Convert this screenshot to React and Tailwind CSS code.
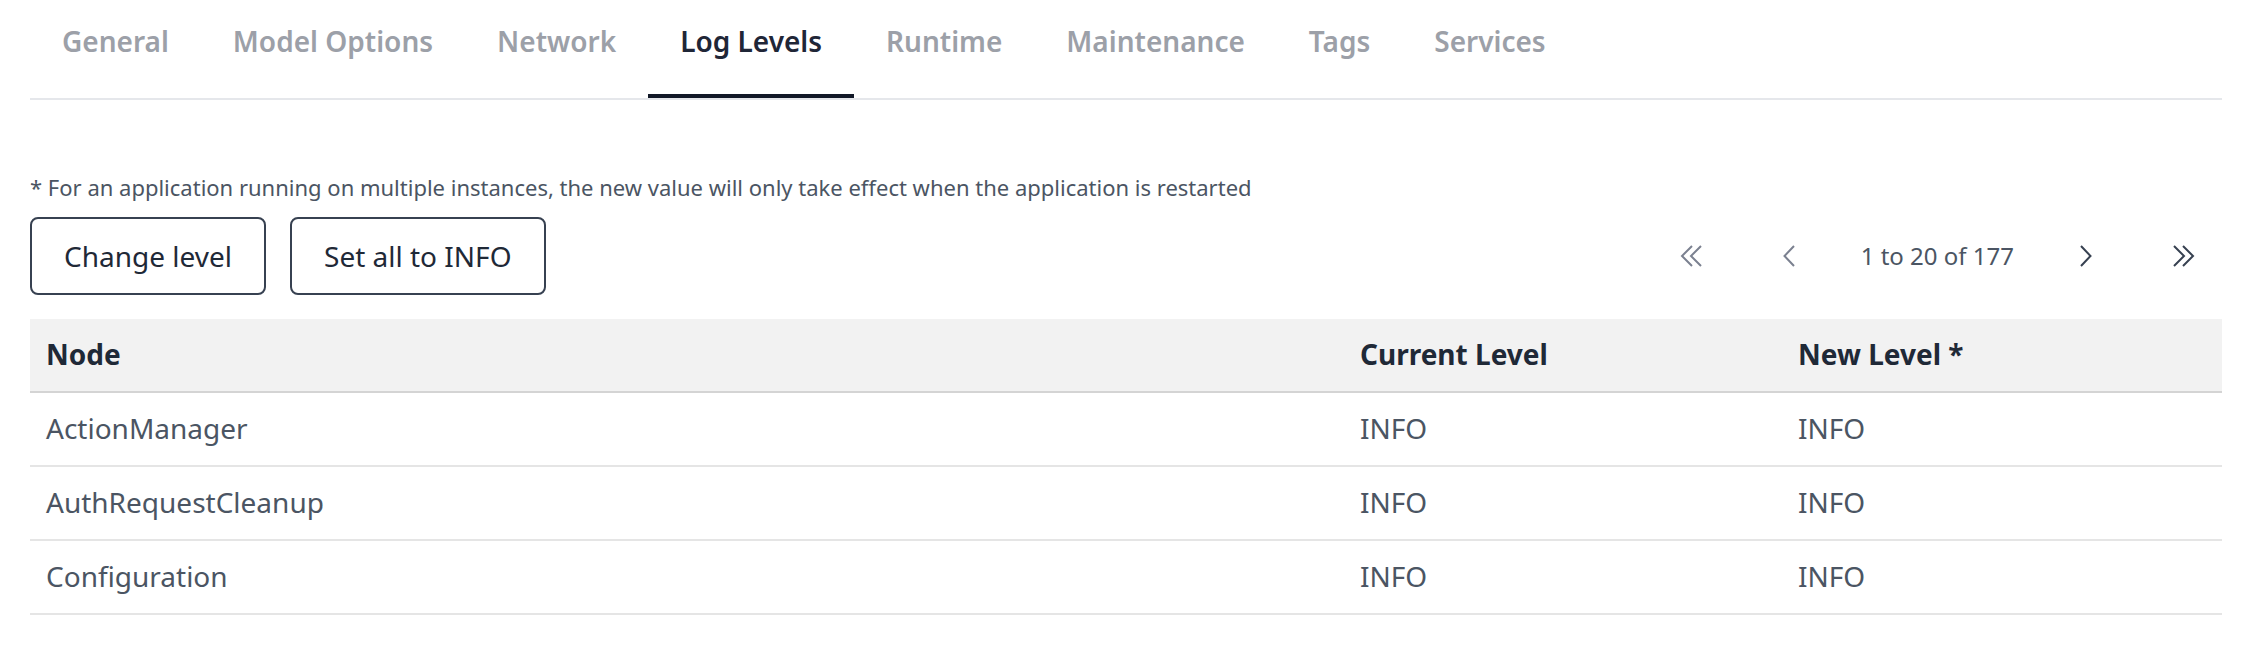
import React from "react";

function ChevronLeft({ className }) {
  return (
    <svg width="12" height="22" viewBox="0 0 12 22" fill="none" className={className}>
      <path d="M11 1 L1.5 11 L11 21" stroke="currentColor" strokeWidth="2" />
    </svg>
  );
}

function ChevronRight({ className }) {
  return (
    <svg width="12" height="22" viewBox="0 0 12 22" fill="none" className={className}>
      <path d="M1 1 L10.5 11 L1 21" stroke="currentColor" strokeWidth="2" />
    </svg>
  );
}

function DoubleLeft({ className }) {
  return (
    <svg width="26" height="22" viewBox="0 0 26 22" fill="none" className={className}>
      <path d="M12 1 L2 11 L12 21" stroke="currentColor" strokeWidth="2" />
      <path d="M21 1 L11 11 L21 21" stroke="currentColor" strokeWidth="2" />
    </svg>
  );
}

function DoubleRight({ className }) {
  return (
    <svg width="26" height="22" viewBox="0 0 26 22" fill="none" className={className}>
      <path d="M5 1 L15 11 L5 21" stroke="currentColor" strokeWidth="2" />
      <path d="M14 1 L24 11 L14 21" stroke="currentColor" strokeWidth="2" />
    </svg>
  );
}

export default function App() {
  const tabs = [
    "General",
    "Model Options",
    "Network",
    "Log Levels",
    "Runtime",
    "Maintenance",
    "Tags",
    "Services",
  ];

  const rows = [
    { node: "ActionManager", current: "INFO", next: "INFO" },
    { node: "AuthRequestCleanup", current: "INFO", next: "INFO" },
    { node: "Configuration", current: "INFO", next: "INFO" },
  ];

  return (
    <div className="min-h-screen bg-white px-[30px] font-['Noto_Sans',sans-serif]">

      {/* tabs */}
      <div className="flex border-b-2 border-[#e5e7eb]">
        {tabs.map((t) => (
          <div
            key={t}
            className={
              t === "Log Levels"
                ? "px-8 pt-[21px] pb-[33px] leading-[40px] text-[28px] font-semibold text-[#1f2637] border-b-4 border-[#111827]"
                : "px-8 pt-[21px] pb-[33px] leading-[40px] text-[28px] font-semibold text-[#9ca0a8] border-b-4 border-transparent"
            }
          >
            {t}
          </div>
        ))}
      </div>

      <p className="mt-[69px] text-[22px] leading-[36px] text-[#4b5563]">
        * For an application running on multiple instances, the new value will only take effect when the application is restarted
      </p>

      {/* actions + pagination */}
      <div className="mt-[12px] flex items-center justify-between">
        <div className="flex gap-[24px]">
          <button className="h-[78px] px-[32px] border-2 border-[#374151] rounded-[8px] text-[28px] leading-[40px] text-[#1f2937]">
            Change level
          </button>
          <button className="h-[78px] px-[32px] border-2 border-[#374151] rounded-[8px] text-[28px] leading-[40px] text-[#1f2937]">
            Set all to INFO
          </button>
        </div>

        <div className="flex items-center gap-[16px]">
          <button className="w-[80px] h-[64px] flex items-center justify-center text-[#7b8190]">
            <DoubleLeft />
          </button>
          <button className="w-[80px] h-[64px] flex items-center justify-center text-[#7b8190]">
            <ChevronLeft />
          </button>
          <span className="px-[16px] text-[24px] leading-[40px] text-[#4b5563]">
            1 to 20 of 177
          </span>
          <button className="w-[80px] h-[64px] flex items-center justify-center text-[#374151]">
            <ChevronRight />
          </button>
          <button className="w-[80px] h-[64px] flex items-center justify-center text-[#374151]">
            <DoubleRight />
          </button>
        </div>
      </div>

      {/* table */}
      <div className="mt-[24px]">
        <div className="grid grid-cols-[1314px_438px_1fr] h-[74px] pb-[2px] items-center bg-[#f2f2f2] border-b-2 border-[#d4d4d4] text-[28px] font-bold text-[#1f2937]">
          <div className="px-4">Node</div>
          <div className="px-4">Current Level</div>
          <div className="px-4">New Level *</div>
        </div>

        {rows.map((r) => (
          <div
            key={r.node}
            className="grid grid-cols-[1314px_438px_1fr] h-[74px] pb-[2px] items-center border-b-2 border-[#e5e5e5] text-[28px] text-[#4b5563]"
          >
            <div className="px-4">{r.node}</div>
            <div className="px-4">{r.current}</div>
            <div className="px-4">{r.next}</div>
          </div>
        ))}
      </div>

    </div>
  );
}
